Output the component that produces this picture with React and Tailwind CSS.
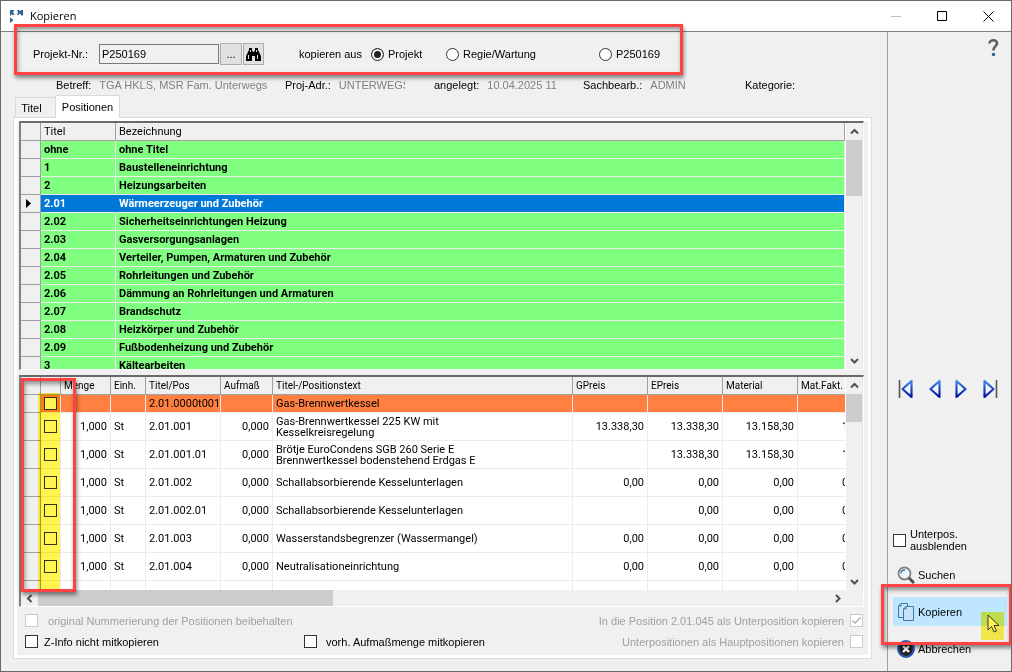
import { useState } from 'react'

const TITLES = [
  { nr: 'ohne', text: 'ohne Titel' },
  { nr: '1', text: 'Baustelleneinrichtung' },
  { nr: '2', text: 'Heizungsarbeiten' },
  { nr: '2.01', text: 'Wärmeerzeuger und Zubehör' },
  { nr: '2.02', text: 'Sicherheitseinrichtungen Heizung' },
  { nr: '2.03', text: 'Gasversorgungsanlagen' },
  { nr: '2.04', text: 'Verteiler, Pumpen, Armaturen und Zubehör' },
  { nr: '2.05', text: 'Rohrleitungen und Zubehör' },
  { nr: '2.06', text: 'Dämmung an Rohrleitungen und Armaturen' },
  { nr: '2.07', text: 'Brandschutz' },
  { nr: '2.08', text: 'Heizkörper und Zubehör' },
  { nr: '2.09', text: 'Fußbodenheizung und Zubehör' },
  { nr: '3', text: 'Kältearbeiten' },
]

const POSITIONS = [
  { pos: '2.01.001', text: 'Gas-Brennwertkessel 225 KW mit\nKesselkreisregelung', g: '13.338,30', e: '13.338,30', m: '13.158,30', f: '1,000' },
  { pos: '2.01.001.01', text: 'Brötje EuroCondens SGB 260 Serie E\nBrennwertkessel bodenstehend Erdgas E', g: '', e: '13.338,30', m: '13.158,30', f: '1,000' },
  { pos: '2.01.002', text: 'Schallabsorbierende Kesselunterlagen', g: '0,00', e: '0,00', m: '0,00', f: '0,000' },
  { pos: '2.01.002.01', text: 'Schallabsorbierende Kesselunterlagen', g: '', e: '0,00', m: '0,00', f: '0,000' },
  { pos: '2.01.003', text: 'Wasserstandsbegrenzer (Wassermangel)', g: '0,00', e: '0,00', m: '0,00', f: '0,000' },
  { pos: '2.01.004', text: 'Neutralisationeinrichtung', g: '0,00', e: '0,00', m: '0,00', f: '0,000' },
]

const HEAD = 'border-r border-b border-[#a0a0a0] bg-[#f0f0f0] px-[3px] text-left font-normal'
const CELL = 'border-r border-b border-[#ececec] px-[3px]'
const STUB = 'border-r border-b border-[#a0a0a0] bg-[#f0f0f0] p-0'

function Arrow({ dir }) {
  const d = {
    up: 'M1 6.5 4.5 3 8 6.5',
    down: 'M1 3 4.5 6.5 8 3',
    left: 'M6.5 1 3 4.5 6.5 8',
    right: 'M3 1 6.5 4.5 3 8',
  }
  return (
    <svg width="9" height="9" viewBox="0 0 9 9" fill="none" stroke="#505050" strokeWidth="2">
      <path d={d[dir]} />
    </svg>
  )
}

function VScroll({ thumb }) {
  return (
    <div className="flex w-[18px] shrink-0 flex-col border-r border-l border-r-[#e3e3e3] border-l-white bg-[#f0f0f0]">
      <div className="flex h-[17px] items-center justify-center"><Arrow dir="up" /></div>
      <div className={`bg-[#cdcdcd] ${thumb}`} />
      <div className="flex-1" />
      <div className="flex h-[17px] items-center justify-center"><Arrow dir="down" /></div>
    </div>
  )
}

function Check({ id, label, checked, disabled }) {
  const [on, setOn] = useState(Boolean(checked))
  return (
    <span className="relative block size-[13px] shrink-0">
      <input
        id={id}
        type="checkbox"
        aria-label={label}
        checked={on}
        disabled={disabled}
        onChange={e => setOn(e.target.checked)}
        className="block size-[13px] appearance-none border border-[#333] bg-white disabled:border-[#ccc]"
      />
      {on && (
        <svg className="pointer-events-none absolute inset-0" width="13" height="13" viewBox="0 0 13 13" fill="none" stroke={disabled ? '#aaa' : '#222'} strokeWidth="1.4">
          <path d="M2.5 6.5 5 9 10.5 3.5" />
        </svg>
      )}
    </span>
  )
}

function Radio({ label, value, source, setSource, className }) {
  return (
    <label className={`flex items-center gap-1 ${className}`}>
      <input
        type="radio"
        name="quelle"
        checked={source === value}
        onChange={() => setSource(value)}
        className="size-[13px] appearance-none rounded-full border border-[#333] bg-white checked:bg-[#222] checked:shadow-[inset_0_0_0_2px_#fff]"
      />
      {label}
    </label>
  )
}

function Marker({ className }) {
  return (
    <div className={`pointer-events-none absolute border-3 border-[#ff4343] shadow-[1px_3px_4px_rgba(0,0,0,0.45),inset_1px_3px_4px_rgba(0,0,0,0.4)] ${className}`} />
  )
}

function NavIcon({ flip, bar }) {
  return (
    <svg
      width={bar ? 16 : 12}
      height="20"
      viewBox={bar ? '0 0 16 20' : '3 0 12 20'}
      className={flip ? '-scale-x-100' : ''}
    >
      <defs>
        <linearGradient id="nav" x1="0" y1="0" x2="0" y2="1">
          <stop offset="0" stopColor="#3f86e8" />
          <stop offset="1" stopColor="#000c9c" />
        </linearGradient>
      </defs>
      {bar && <path d="M1.5 1v18" stroke="#555" strokeWidth="1.6" />}
      <path d="M13.5 2v16L4.500 10z" fill="#f4f6fb" stroke="url(#nav)" strokeWidth="2.2" strokeLinejoin="round" />
    </svg>
  )
}

function TitleGrid() {
  const [active, setActive] = useState('2.01')
  return (
    <div className="flex h-[249px] shrink-0 border-t-2 border-l-2 border-r border-b border-t-[#696969] border-l-[#808080] border-r-white border-b-white font-[Roboto,sans-serif] text-[11px]">
      <div className="min-w-0 flex-1 overflow-hidden bg-white">
        <table className="w-full table-fixed border-separate border-spacing-0">
          <colgroup>
            <col className="w-5" />
            <col className="w-[75px]" />
            <col />
          </colgroup>
          <thead>
            <tr className="h-[18px]">
              <th className={HEAD} />
              <th className={HEAD}>Titel</th>
              <th className={HEAD}>Bezeichnung</th>
            </tr>
          </thead>
          <tbody className="font-bold">
            {TITLES.map(t => (
              <tr
                key={t.nr}
                onClick={() => setActive(t.nr)}
                className={`h-[18px] ${t.nr === active ? 'bg-[#0078d7] text-white' : 'bg-[#80ff80]'}`}
              >
                <td className={STUB}>
                  {t.nr === active && (
                    <svg className="ml-[5px]" width="5" height="9" viewBox="0 0 5 9"><path d="M0 0v9l5-4.5z" /></svg>
                  )}
                </td>
                <td className={`${CELL} ${t.nr === active ? 'border-r-[#0078d7]' : ''}`}>{t.nr}</td>
                <td className={`truncate ${CELL}`}>{t.text}</td>
              </tr>
            ))}
          </tbody>
        </table>
      </div>
      <VScroll thumb="h-14" />
    </div>
  )
}

function PositionGrid() {
  const heads = ['Menge', 'Einh.', 'Titel/Pos', 'Aufmaß', 'Titel-/Positionstext', 'GPreis', 'EPreis', 'Material', 'Mat.Fakt.']
  return (
    <div className="relative mt-[5px] flex min-h-0 flex-1 flex-col border-t-2 border-l-2 border-r border-b border-t-[#696969] border-l-[#808080] border-r-white border-b-white font-[Roboto,sans-serif] text-[11px]">
      <div className="flex min-h-0 flex-1">
        <div className="relative min-w-0 flex-1 overflow-hidden bg-white">
          <table className="w-[calc(100%+28px)] table-fixed border-separate border-spacing-0">
            <colgroup>
              <col className="w-5" />
              <col className="w-5" />
              <col className="w-[50px]" />
              <col className="w-[35px]" />
              <col className="w-[75px]" />
              <col className="w-[52px]" />
              <col />
              <col className="w-[75px]" />
              <col className="w-[75px]" />
              <col className="w-[75px]" />
              <col className="w-[75px]" />
            </colgroup>
            <thead className="text-[10px]">
              <tr className="h-[18px]">
                <th className={HEAD} />
                <th className={HEAD} />
                {heads.map(h => <th key={h} className={HEAD}>{h}</th>)}
              </tr>
            </thead>
            <tbody>
              <tr className="h-[18px] bg-[#ff8040]">
                <td className={STUB} />
                <td className={CELL}><Check label="2.01.0000t001" /></td>
                <td className={CELL} />
                <td className={CELL} />
                <td className={`whitespace-nowrap ${CELL}`}>2.01.0000t001</td>
                <td className={CELL} />
                <td className={CELL}>Gas-Brennwertkessel</td>
                <td className={CELL} />
                <td className={CELL} />
                <td className={CELL} />
                <td className={CELL} />
              </tr>
              {POSITIONS.map(p => (
                <tr key={p.pos} className="h-7">
                  <td className={STUB} />
                  <td className={CELL}><Check label={p.pos} /></td>
                  <td className={`text-right ${CELL}`}>1,000</td>
                  <td className={CELL}>St</td>
                  <td className={CELL}>{p.pos}</td>
                  <td className={`text-right ${CELL}`}>0,000</td>
                  <td className={`leading-[11px] whitespace-pre-line ${CELL}`}>{p.text}</td>
                  <td className={`text-right ${CELL}`}>{p.g}</td>
                  <td className={`text-right ${CELL}`}>{p.e}</td>
                  <td className={`text-right ${CELL}`}>{p.m}</td>
                  <td className={`text-right ${CELL}`}>{p.f}</td>
                </tr>
              ))}
              <tr className="h-7">
                <td className={STUB} />
                {[...heads, 'check'].map(h => <td key={h} className={CELL} />)}
              </tr>
            </tbody>
          </table>
          <div className="pointer-events-none absolute top-4 bottom-0 left-[17px] w-[22px] bg-[#fff450] mix-blend-multiply" />
        </div>
        <VScroll thumb="h-7" />
      </div>
      <div className="flex h-4 bg-[#f0f0f0]">
        <div className="flex w-[17px] items-center justify-center"><Arrow dir="left" /></div>
        <div className="w-[35%] bg-[#cdcdcd]" />
        <div className="flex-1" />
        <div className="flex w-[17px] items-center justify-center"><Arrow dir="right" /></div>
        <div className="w-[17px]" />
      </div>
      <Marker className="top-px bottom-[14px] left-0 w-[55px]" />
    </div>
  )
}

function Info({ label, value, className, valueClass = '' }) {
  return (
    <div className={`flex gap-2 whitespace-nowrap ${className}`}>
      <span>{label}</span>
      <span className={`overflow-hidden text-[#808080] ${valueClass}`}>{value}</span>
    </div>
  )
}

export default function App() {
  const [source, setSource] = useState('projekt')
  const [project, setProject] = useState('P250169')

  return (
    <div className="flex h-screen flex-col overflow-hidden border border-[#6a6a6a] bg-[#f0f0f0] font-['Liberation_Sans',sans-serif] text-[11px] leading-4 text-black">
      {/* Titelleiste */}
      <header className="flex h-[31px] shrink-0 items-center border-b border-[#808080] bg-white pl-2">
        <svg width="15" height="15" viewBox="0 0 15 15" fill="#2f6391">
          <path d="M1 1h4.500L4 3l1.500 3H3.500L2.500 5 2 6.500H1zM8 1h2l1 1 1.500-1H14v5.500h-1.500L11 4.500 9.500 6H8l1-2.500zM1 8.500l3.500 2.500L1 14z" />
        </svg>
        <h1 className="ml-[6px] font-['Open_Sans',sans-serif] text-[11px]">Kopieren</h1>
        <div className="ml-auto flex">
          <button aria-label="Minimieren" className="flex h-[30px] w-[46px] items-center justify-center">
            <svg width="10" height="10" stroke="#bbb"><path d="M0 5.500h10" /></svg>
          </button>
          <button aria-label="Maximieren" className="flex h-[30px] w-[46px] items-center justify-center">
            <svg width="10" height="10" fill="none" stroke="#000"><path d="M.5.5h9v9h-9z" /></svg>
          </button>
          <button aria-label="Schließen" className="flex h-[30px] w-[46px] items-center justify-center">
            <svg width="11" height="11" stroke="#000"><path d="M.5.5l10 10M10.500.5l-10 10" /></svg>
          </button>
        </div>
      </header>

      <div className="flex min-h-0 flex-1">
        <main className="flex min-w-0 flex-1 flex-col pt-[11px] pr-[15px] pb-3 pl-3">
          {/* Projektauswahl */}
          <div className="relative flex h-[22px] shrink-0 items-center pl-5">
            <label htmlFor="projekt" className="w-[66px]">Projekt-Nr.:</label>
            <input
              id="projekt"
              value={project}
              onChange={e => setProject(e.target.value)}
              className="h-5 w-[120px] border border-[#7a7a7a] bg-[#f0f0f0] px-[2px] outline-none"
            />
            <button className="ml-px h-[22px] w-[22px] border border-[#adadad] bg-[#e1e1e1]">...</button>
            <button aria-label="Projekt suchen" className="ml-px flex h-[22px] w-[21px] items-center justify-center border border-[#adadad] bg-[#e1e1e1]">
              <svg width="15" height="13" viewBox="0 0 15 13">
                <path d="M3 0h3v2l1 2h1l1-2V0h3v2l3 6v5H9V8H6v5H0V8l3-6z" />
                <path d="M2.500 7v4M11.500 7v4M4.500 2v2M10.500 2v2" stroke="#e1e1e1" />
              </svg>
            </button>
            <span className="ml-[35px] w-[72px] whitespace-nowrap">kopieren aus</span>
            <Radio label="Projekt" value="projekt" source={source} setSource={setSource} className="w-[75px]" />
            <Radio label="Regie/Wartung" value="regie" source={source} setSource={setSource} className="w-[153px]" />
            <Radio label="P250169" value="aktuell" source={source} setSource={setSource} className="" />
            <Marker className="-top-[19px] left-px h-[51px] w-[669px]" />
          </div>

          <div className="mt-3 flex h-4 shrink-0 pl-[43px]">
            <Info label="Betreff:" value="TGA HKLS, MSR Fam. Unterwegs" className="w-[229px]" />
            <Info label="Proj-Adr.:" value="UNTERWEGS" className="w-[149px]" valueClass="w-[66px]" />
            <Info label="angelegt:" value="10.04.2025 11" className="w-[149px]" />
            <Info label="Sachbearb.:" value="ADMIN" className="w-[162px]" />
            <Info label="Kategorie:" value="" className="" />
          </div>

          <div className="mt-[2px] flex shrink-0 items-end pl-[2px]" role="tablist">
            <button role="tab" aria-selected="false" className="h-5 w-10 border border-r-0 border-b-0 border-[#d9d9d9] pr-2">Titel</button>
            <button role="tab" aria-selected="true" className="relative -mb-px h-[23px] w-[65px] border border-b-0 border-[#d9d9d9] bg-white pb-px">Positionen</button>
          </div>

          <section className="flex min-h-0 flex-1 flex-col border border-[#dcdcdc] bg-white p-[3px]">
            <div className="flex min-h-0 flex-1 flex-col bg-[#f0f0f0] pr-1 pl-[2px]">
              <TitleGrid />
              <PositionGrid />
              <div className="flex h-12 shrink-0 justify-between pr-px pl-[6px]">
                <div className="flex flex-col justify-center gap-[5px]">
                  <label className="flex items-center gap-[10px] text-[#a0a0a0]">
                    <Check disabled />original Nummerierung der Positionen beibehalten
                  </label>
                  <div className="flex">
                    <label className="flex w-[279px] items-center gap-[6px]"><Check />Z-Info nicht mitkopieren</label>
                    <label className="flex items-center gap-[9px]"><Check />vorh. Aufmaßmenge mitkopieren</label>
                  </div>
                </div>
                <div className="flex flex-col items-end justify-center gap-[5px] text-[#a0a0a0]">
                  <label className="flex items-center gap-[6px]">In die Position 2.01.045 als Unterposition kopieren<Check checked disabled /></label>
                  <label className="flex items-center gap-[6px]">Unterpositionen als Hauptpositionen kopieren<Check disabled /></label>
                </div>
              </div>
            </div>
          </section>
        </main>

        {/* Aktionen */}
        <aside className="flex w-[124px] shrink-0 flex-col border-l border-[#a0a0a0] pt-[7px] pb-2 pl-[5px]">
          <button aria-label="Hilfe" className="mr-3 self-end">
            <svg width="11" height="18" viewBox="0 0 11 18" fill="none">
              <path d="M1.500 4.500C1.500 0 9.500.5 9 4.500 8.700 7.500 5.500 7 5.500 11.500" stroke="#606060" strokeWidth="2.600" />
              <circle cx="5.500" cy="15.500" r="1.700" fill="#2d5f96" />
            </svg>
          </button>
          <div className="flex-[5]" />
          <div className="flex justify-between pr-[13px] pl-[5px]">
            <button aria-label="Erster"><NavIcon bar /></button>
            <button aria-label="Zurück"><NavIcon /></button>
            <button aria-label="Weiter"><NavIcon flip /></button>
            <button aria-label="Letzter"><NavIcon bar flip /></button>
          </div>
          <div className="flex-[2]" />
          <label className="mb-2 flex items-center gap-1 leading-3"><Check /><span>Unterpos.<br />ausblenden</span></label>
          <div className="flex flex-col gap-2 pr-1">
            <button className="flex h-[29px] items-center gap-[3px] pl-1">
              <svg width="18" height="18" viewBox="0 0 18 18" fill="none">
                <circle cx="7.500" cy="7.500" r="6" fill="#eef4fb" stroke="#808080" strokeWidth="1.800" />
                <path d="M4 7.500C4 5 6 4 8 4" stroke="#3c78c8" strokeWidth="1.300" />
                <path d="M12 12l5 5" stroke="#505050" strokeWidth="3" />
              </svg>
              Suchen
            </button>
            <div className="relative">
              <button className="flex h-[29px] w-full items-center gap-[3px] bg-[#bfe6ff] pl-1">
                <svg width="18" height="18" viewBox="0 0 18 18" fill="#c9e4f6" stroke="#3a78ad">
                  <path d="M4 .5h6.500v14H1.500V3z M4 .5V3H1.500" />
                  <path d="M9 3.500h7.500v14h-10V6z M9 3.500V6H6.500" />
                </svg>
                Kopieren
              </button>
              <div className="pointer-events-none absolute top-[15px] right-[3px] h-7 w-[23px] bg-[#fff450] mix-blend-multiply" />
              <svg className="pointer-events-none absolute top-[17px] right-[7px]" width="13" height="19" viewBox="0 0 13 19">
                <path d="M1 1v15l3.500-3.500L7 18l2.500-1L7 11.500h5z" fill="#fff450" stroke="#333" />
              </svg>
              <Marker className="-top-[13px] -right-[5px] z-10 -left-[12px] h-[61px]" />
            </div>
            <button className="flex h-[29px] items-center gap-[3px] pl-1">
              <svg width="18" height="18" viewBox="0 0 18 18">
                <circle cx="9" cy="9" r="7.800" fill="#222" stroke="#2c55ad" strokeWidth="2.200" />
                <path d="M6 6l6 6M12 6l-6 6" stroke="#fff" strokeWidth="2.400" />
              </svg>
              Abbrechen
            </button>
          </div>
        </aside>
      </div>
    </div>
  )
}
